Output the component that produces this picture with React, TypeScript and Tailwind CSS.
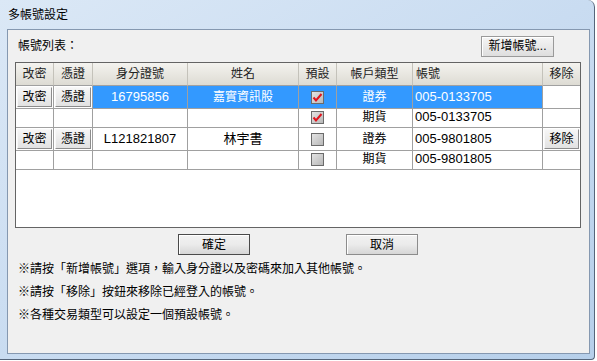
import type { ReactNode } from "react";

const COLS = "grid-cols-[38px_39px_95px_111px_38px_76px_130px_37px]";

type Row = {
  id: string;
  name: string;
  checked: boolean;
  kind: string;
  account: string;
  buttons: boolean;
  selected: boolean;
};

const ROWS: Row[] = [
  { id: "16795856", name: "嘉實資訊股", checked: true, kind: "證券", account: "005-0133705", buttons: true, selected: true },
  { id: "", name: "", checked: true, kind: "期貨", account: "005-0133705", buttons: false, selected: false },
  { id: "L121821807", name: "林宇書", checked: false, kind: "證券", account: "005-9801805", buttons: true, selected: false },
  { id: "", name: "", checked: false, kind: "期貨", account: "005-9801805", buttons: false, selected: false },
];

function CellButton({ children }: { children: ReactNode }) {
  return (
    <div className="m-[1px] flex flex-1 items-center justify-center border border-[#f8f8f8] border-r-[#8c8c8c] border-b-[#8c8c8c] bg-gradient-to-b from-[#f6f6f6] to-[#e2e2e2] text-[12px] text-black">
      {children}
    </div>
  );
}

function Check({ on }: { on: boolean }) {
  return (
    <div className="flex h-[13px] w-[13px] items-center justify-center border border-[#6b6b6b] bg-gradient-to-br from-[#e4e4e4] to-[#b8b8b8]">
      {on && (
        <svg width="11" height="11" viewBox="0 0 11 11">
          <path d="M1.5 5.5 L4 8.5 L9.5 2" fill="none" stroke="#e0141e" strokeWidth="2" strokeLinejoin="miter" />
        </svg>
      )}
    </div>
  );
}

function DlgButton({ children, className = "" }: { children: ReactNode; className?: string }) {
  return (
    <button
      className={`flex h-[21px] w-[72px] items-center justify-center border bg-gradient-to-b from-[#f2f2f2] via-[#ebebeb] to-[#d6d6d6] text-[12px] text-black shadow-[inset_1px_1px_0_#fff] ${className}`}
    >
      {children}
    </button>
  );
}

export default function App() {
  const cell = "flex items-center border-r border-b border-[#a0a0a0]";
  const last = "flex items-center border-b border-[#a0a0a0]";

  return (
    <div
      className="h-[361px] w-[597px] overflow-hidden bg-white"
      style={{ fontFamily: '"Liberation Sans", "Noto Sans CJK TC", sans-serif' }}
    >
      {/* ── Window frame ── */}
      <div className="flex h-[360px] w-[595px] flex-col rounded-tr-[7px] rounded-br-[4px] border-r border-b border-[#55657a] bg-gradient-to-br from-[#dbe8f6] via-[#c9dcf1] to-[#b6cfea] pl-[7px] pr-[4px] pb-[5px]">
        {/* ── Title ── */}
        <div className="flex h-[29px] items-center pl-[1px] text-[12px] text-black">多帳號設定</div>

        {/* ── Client area ── */}
        <div className="flex flex-1 flex-col border border-[#8598b0] bg-[#f0f0f0] pl-[7px] pr-[35px]">
          <div className="mt-[6px] flex h-[20px] items-center justify-between">
            <span className="pl-[3px] text-[12px] text-black">帳號列表：</span>
            <button className="flex h-[21px] w-[73px] items-center justify-center border border-[#9a9a9a] bg-gradient-to-b from-[#f5f5f5] to-[#dedede] text-[12px] text-black shadow-[inset_1px_1px_0_#fff]">
              新增帳號...
            </button>
          </div>

          {/* ── Account grid ── */}
          <div className="mt-[6px] h-[166px] w-[566px] border border-[#646464] bg-white">
            <div className={`grid h-[23px] ${COLS} bg-gradient-to-b from-[#f4f3ef] to-[#dcdad2] text-[12px] text-[#222]`}>
              {["改密", "憑證", "身分證號", "姓名", "預設", "帳戶類型"].map((h) => (
                <div key={h} className={`${cell} justify-center border-r-[#c4c2ba] border-b-[#a0a0a0]`}>{h}</div>
              ))}
              <div className={`${cell} border-r-[#c4c2ba] pl-[3px]`}>帳號</div>
              <div className={`${last} justify-center`}>移除</div>
            </div>

            {ROWS.map((r, i) => {
              const sel = r.selected ? "bg-[#3399ff] text-white" : "text-black";
              return (
                <div key={i} className={`grid h-[21px] ${COLS}`}>
                  <div className={`${cell} p-0`}>{r.buttons && <CellButton>改密</CellButton>}</div>
                  <div className={`${cell} p-0`}>{r.buttons && <CellButton>憑證</CellButton>}</div>
                  <div className={`${cell} ${sel} justify-center text-[13px]`}>{r.id}</div>
                  <div className={`${cell} ${sel} justify-center ${r.selected ? "text-[12px]" : "text-[13px]"}`}>{r.name}</div>
                  <div className={`${cell} ${sel} justify-center`}><Check on={r.checked} /></div>
                  <div className={`${cell} ${sel} justify-center text-[12px]`}>{r.kind}</div>
                  <div className={`${cell} ${sel} pl-[2px] text-[13px]`}>{r.account}</div>
                  <div className={`${last} p-0`}>{r.buttons && !r.selected && <CellButton>移除</CellButton>}</div>
                </div>
              );
            })}
          </div>

          {/* ── Dialog buttons ── */}
          <div className="mt-[6px] flex pl-[163px]">
            <DlgButton className="border-[#4a4a4a]">確定</DlgButton>
            <DlgButton className="ml-[96px] border-[#8c8c8c]">取消</DlgButton>
          </div>

          {/* ── Notes ── */}
          <div className="mt-[3px] pl-[3px] text-[12px] leading-[23px] text-black">
            <p>※請按「新增帳號」選項，輸入身分證以及密碼來加入其他帳號。</p>
            <p>※請按「移除」按鈕來移除已經登入的帳號。</p>
            <p>※各種交易類型可以設定一個預設帳號。</p>
          </div>
        </div>
      </div>
    </div>
  );
}
